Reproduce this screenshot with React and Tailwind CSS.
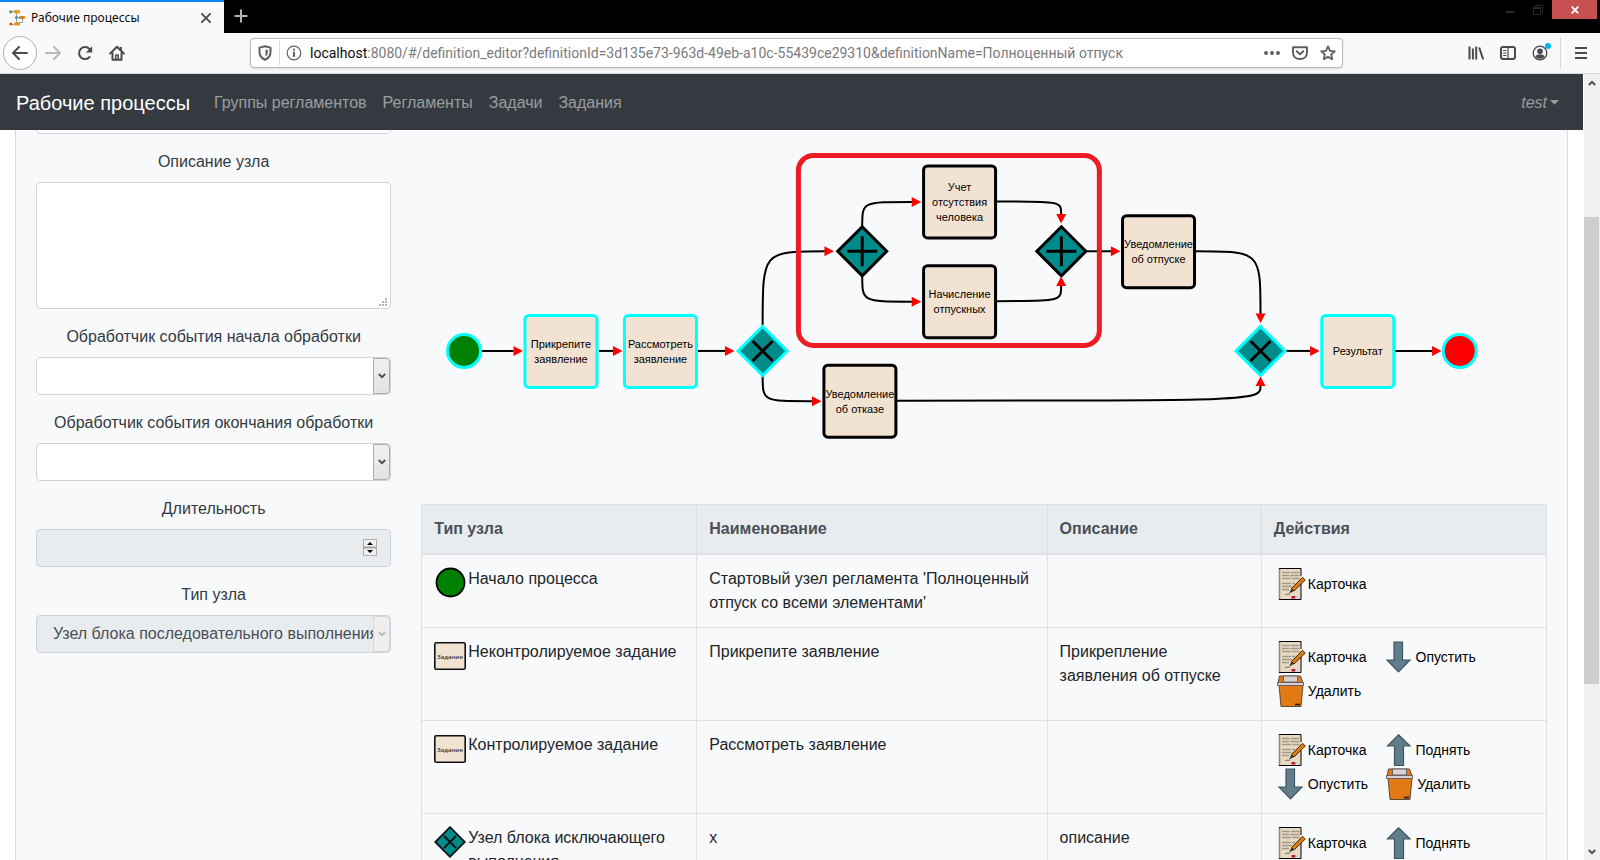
import React from "react";

/* ---------- browser chrome icons ---------- */

function Favicon() {
  return (
    <svg width="16" height="16" viewBox="0 0 16 16" fill="none" aria-hidden="true">
      <path d="M3 1.500h4M7.500 3v10M3 14.500h3M8 7.500h2M13.500 9v3.500M13.500 12.500H8" stroke="#9aa0a4" />
      <circle cx="1.800" cy="1.800" r="1.600" fill="#3e9a6f" />
      <circle cx="1.800" cy="14" r="1.600" fill="#cf4b3c" />
      <rect x="5" y="0" width="6" height="3.500" rx="1" fill="#e0a020" />
      <rect x="5" y="12.500" width="6" height="3" rx="1" fill="#d89a22" />
      <rect x="10" y="6" width="6" height="3" rx="1" fill="#d28a1c" />
      <path d="M7.500 5.500L9.500 7.500 7.500 9.500 5.500 7.500z" fill="#4b93a8" />
    </svg>
  );
}

function Icon({ size = 16, children, className = "" }) {
  return (
    <svg width={size} height={size} viewBox="0 0 16 16" fill="none" stroke="currentColor" strokeWidth="2" strokeLinecap="round" strokeLinejoin="round" className={className} aria-hidden="true">
      {children}
    </svg>
  );
}

function ToolButton({ label, children, className = "" }) {
  return (
    <button type="button" aria-label={label} className={"flex size-8 shrink-0 items-center justify-center text-[#4a4a4f] " + className}>
      {children}
    </button>
  );
}

function TabStrip() {
  return (
    <header className="flex h-[33px] shrink-0 items-start bg-black">
      <div className="flex h-full w-56 items-center border-t-2 border-[#0a84ff] bg-[#f9f9fa] pl-[9px] pr-2">
        <Favicon />
        <span className="ml-1.5 flex-1 font-['Noto_Sans',sans-serif] text-[12px] text-[#0c0c0d]">Рабочие процессы</span>
        <button type="button" aria-label="Закрыть вкладку" className="flex size-5 items-center justify-center text-[#4a4a4f]">
          <Icon size={12}><path d="M2.500 2.500l11 11M13.500 2.500l-11 11" strokeWidth="2.400" /></Icon>
        </button>
      </div>
      <button type="button" aria-label="Новая вкладка" className="flex h-8 w-[34px] items-center justify-center text-[#b4b4b4]">
        <Icon size={16}><path d="M8 1.500v13M1.500 8h13" strokeLinecap="butt" /></Icon>
      </button>
      <div className="ml-auto flex h-[19px] pr-[3px]">
        <button type="button" aria-label="Свернуть" className="flex w-7 items-center justify-center text-[#2b2b2b]">
          <svg width="8" height="8" aria-hidden="true"><path d="M0 6h8" stroke="currentColor" strokeWidth="2" /></svg>
        </button>
        <button type="button" aria-label="Развернуть" className="flex w-7 items-center justify-center text-[#2b2b2b]">
          <svg width="10" height="10" fill="none" aria-hidden="true"><path d="M.500 2.500h7v7h-7zM.500 3.500h7M2 .500h7.500V8" stroke="currentColor" /></svg>
        </button>
        <button type="button" aria-label="Закрыть" className="flex w-[45px] items-center justify-center bg-[#c75050] text-white">
          <svg width="8" height="8" aria-hidden="true"><path d="M.700.700l6.600 6.600M7.300.700L.700 7.300" stroke="currentColor" strokeWidth="1.800" /></svg>
        </button>
      </div>
    </header>
  );
}

function Toolbar() {
  return (
    <div className="flex h-[41px] shrink-0 items-center border-b border-[#d7d7db] bg-[#f9f9fa] px-[3px]">
      <button type="button" aria-label="Назад" className="flex size-[34px] items-center justify-center rounded-full border border-[#b1b1b3] bg-white text-[#4a4a4f]">
        <Icon><path d="M15 8H1.500M7 2L1 8l6 6" /></Icon>
      </button>
      <ToolButton label="Вперёд" className="text-[#b9b9bb]"><Icon><path d="M1 8h13.500M9 2l6 6-6 6" /></Icon></ToolButton>
      <ToolButton label="Обновить"><Icon>
        <path d="M12.600 12A6 6 0 1 1 12.500 4" />
        <path d="M15.200 1.200v6.300h-6.300z" fill="currentColor" stroke="none" />
      </Icon></ToolButton>
      <ToolButton label="Домой"><Icon>
        <path d="M1.200 8.500L8 1.800l6.800 6.700" /><path d="M3.500 8v6.800h9V8" />
        <path d="M6.800 14.500V10h2.400v4.500" strokeWidth="1.500" /><path d="M11.800 2v3" strokeLinecap="butt" />
      </Icon></ToolButton>
      <div className="ml-[117px] flex h-[30px] min-w-0 flex-1 items-center rounded-sm border border-[#b9b9bb] bg-white pl-1.5 shadow-sm">
        <Icon className="shrink-0 text-[#5f5f63]">
          <path d="M2.500 2.600L8 1.300l5.500 1.300v4.400c0 4-2.500 6.500-5.500 7.700C5 13.500 2.500 11 2.500 7z" />
          <path d="M8.500 4.500v7c1.500-1 2.300-2.500 2.300-4.500V5z" fill="currentColor" stroke="none" />
        </Icon>
        <span className="mx-1.5 h-6 w-px bg-[#d7d7db]" />
        <Icon className="shrink-0 text-[#5f5f63]"><circle cx="8" cy="8" r="6.800" strokeWidth="1.200" /><path d="M8 7.500v3.700" /><path d="M8 4.600v.100" /></Icon>
        <p className="ml-2 min-w-0 flex-1 truncate font-[Roboto,sans-serif] text-[14px] text-[#7a7a7d]">
          <span className="text-[#0c0c0d]">localhost</span>:8080/#/definition_editor?definitionId=3d135e73-963d-49eb-a10c-55439ce29310&amp;definitionName=Полноценный отпуск
        </p>
        <button type="button" aria-label="Действия на странице" className="flex size-7 items-center justify-center text-[#5f5f63]">
          <Icon><g fill="currentColor" stroke="none"><circle cx="2" cy="8" r="2" /><circle cx="8" cy="8" r="2" /><circle cx="14" cy="8" r="2" /></g></Icon>
        </button>
        <button type="button" aria-label="Сохранить в Pocket" className="flex size-7 items-center justify-center text-[#5f5f63]">
          <Icon><path d="M1 2.200h14v5.300c0 4-3 6.500-7 6.500s-7-2.500-7-6.500z" /><path d="M4.800 6.300L8 9.400l3.200-3.100" /></Icon>
        </button>
        <button type="button" aria-label="Добавить в закладки" className="flex size-7 items-center justify-center text-[#5f5f63]">
          <Icon><path d="M8 1.400l2 4.400 4.800.500-3.600 3.200 1 4.800L8 11.900l-4.200 2.400 1-4.800L1.200 6.300 6 5.800z" strokeWidth="1.800" /></Icon>
        </button>
      </div>
      <div className="ml-[117px] flex items-center">
        <ToolButton label="Библиотека"><Icon><path d="M1.500 1.500v13M4.900 3.500v11M8.200 1.500v13M11.200 2.500l4 12" strokeLinecap="butt" /></Icon></ToolButton>
        <ToolButton label="Боковая панель"><Icon><rect x="1" y="2" width="14" height="12" rx="2" /><path d="M8 2v12" strokeWidth="1.200" /><path d="M3.500 5.500h2.500M3.500 8h2.500M3.500 10.500h2.500" strokeWidth="1" /></Icon></ToolButton>
        <ToolButton label="Аккаунт" className="relative">
          <Icon><circle cx="8" cy="8" r="6.800" strokeWidth="1.300" /><circle cx="8" cy="6.300" r="2.800" fill="currentColor" stroke="none" /><path d="M3.500 11.500c1-2 2.300-2 4.500-2s3.500 0 4.500 2c-1 1.500-2.600 2.200-4.500 2.200s-3.500-.700-4.500-2.200z" fill="currentColor" stroke="none" /></Icon>
          <span className="absolute right-[5px] top-[6px] size-1.5 rounded-full bg-[#00b3f4]" />
        </ToolButton>
        <span className="ml-1 h-8 w-px bg-[#d7d7db]" />
        <ToolButton label="Меню" className="ml-1"><Icon><path d="M2 3h12M2 8h12M2 13h12" strokeLinecap="butt" /></Icon></ToolButton>
      </div>
    </div>
  );
}

/* ---------- site navigation ---------- */

const links = ["Группы регламентов", "Регламенты", "Задачи", "Задания"];

function NavBar() {
  return (
    <nav className="flex h-14 shrink-0 items-center bg-[#343a40] px-4 pt-px text-white/50">
      <a href="#/" className="mr-4 text-xl text-white">Рабочие процессы</a>
      {links.map((l) => <a key={l} href="#/" className="px-2">{l}</a>)}
      <button type="button" className="ml-auto flex items-center gap-[3px] px-2 italic">
        test
        <svg width="9" height="5" aria-hidden="true"><path d="M0 0h9L4.500 4.800z" fill="currentColor" /></svg>
      </button>
    </nav>
  );
}

/* ---------- node form ---------- */

const field = "block w-full rounded border border-[#ced4da] text-[#495057]";

function Field({ id, label, children }) {
  return (
    <div className="mb-4">
      <label htmlFor={id} className="mb-2 block text-center">{label}</label>
      <div className="relative">{children}</div>
    </div>
  );
}

function Select({ id, disabled, value }) {
  return (
    <>
      <select id={id} disabled={disabled} className={field + " h-[38px] appearance-none pl-4 pr-[17px] opacity-100 " + (disabled ? "bg-[#e9ecef]" : "bg-white")}>
        <option>{value}</option>
      </select>
      <span className={"pointer-events-none absolute inset-y-px right-px flex w-[17px] items-center justify-center rounded-r-sm border " + (disabled ? "border-[#d6d6d6] bg-[#efefef] text-[#bdbdbd]" : "border-[#adadad] bg-gradient-to-b from-[#f0f0f0] to-[#e3e3e3] text-[#505050]")}>
        <svg width="8" height="6" fill="none" aria-hidden="true"><path d="M.800 1L4 4.200 7.200 1" stroke="currentColor" strokeWidth="2" /></svg>
      </span>
    </>
  );
}

function NodeForm() {
  return (
    <form className="text-[#343a40]">
      <input aria-label="Наименование узла" className={field + " mb-4 h-[38px] bg-white px-3"} />
      <Field id="description" label="Описание узла">
        <textarea id="description" className={field + " h-[127px] resize-none bg-white px-3 py-1.5"} />
        <svg width="8" height="8" className="pointer-events-none absolute bottom-[3px] right-1" fill="#b5b5b5" aria-hidden="true">
          <path d="M6 0h2v2H6zM3 3h2v2H3zM6 3h2v2H6zM0 6h2v2H0zM3 6h2v2H3zM6 6h2v2H6z" />
        </svg>
      </Field>
      <Field id="onStart" label="Обработчик события начала обработки"><Select id="onStart" value="" /></Field>
      <Field id="onEnd" label="Обработчик события окончания обработки"><Select id="onEnd" value="" /></Field>
      <Field id="duration" label="Длительность">
        <input id="duration" type="text" inputMode="numeric" disabled className={field + " h-[38px] bg-[#e9ecef] px-3"} />
        <svg width="14" height="17" className="pointer-events-none absolute right-3.5 top-2.5" aria-hidden="true">
          <path d="M.500.500h13v16H.500z" fill="#f0f0f0" stroke="#adadad" />
          <path d="M0 8.500h14" stroke="#a0a0a0" strokeWidth="2" />
          <path d="M4 6l3-3 3 3zM4 11h6l-3 3z" />
        </svg>
      </Field>
      <Field id="nodeType" label="Тип узла"><Select id="nodeType" disabled value="Узел блока последовательного выполнения" /></Field>
    </form>
  );
}

/* ---------- process diagram ---------- */

function Task({ x, y, lines, stroke = "#000" }) {
  const first = y + 4 - (lines.length - 1) * 7.5;
  return (
    <g>
      <rect x={x - 36} y={y - 36} width="72" height="72" rx="4" fill="#f2e2d2" stroke={stroke} strokeWidth="3" />
      {lines.map((t, i) => (
        <text key={t} x={x} y={first + i * 15} textAnchor="middle" fontSize="11">{t}</text>
      ))}
    </g>
  );
}

function Gateway({ x, y, kind, stroke = "#000" }) {
  return (
    <g transform={`translate(${x} ${y})`} strokeWidth="3">
      <path d="M0-24.500L24.500 0 0 24.500-24.500 0z" fill="#008b8b" stroke={stroke} />
      <path d={kind === "plus" ? "M0-15V15M-15 0H15" : "M-10-10L10 10M10-10L-10 10"} stroke="#000" />
    </g>
  );
}

const edges = [
  "M482 351H513.5", "M599 351H613", "M698 351H725.500",
  "M762.700 325C762.700 251.300 762.700 251.300 825 251.300",
  "M762.700 376C762.700 401.300 762.700 401.300 812 401.300",
  "M862.300 226C862.300 202 862.300 202 912 202",
  "M862.300 276C862.300 301.700 862.300 301.700 912 301.700",
  "M997 201.500C1061.300 201.500 1061.300 201.500 1061.300 214",
  "M997 301.200C1061.300 301.200 1061.300 301.200 1061.300 286",
  "M1086 251.300H1111.500",
  "M1196 251.300C1260.700 251.300 1260.700 251.300 1260.700 314",
  "M897 400.800C1260.700 400.800 1260.700 400.800 1260.700 386",
  "M1286 351H1310.500", "M1395 351H1432.500",
];

const heads = [
  [523, 351, 0], [622.5, 351, 0], [734.500, 351, 0], [834, 251.300, 0], [821.500, 401.300, 0],
  [921.300, 202, 0], [921.300, 301.700, 0], [1061.300, 223.500, 90], [1061.300, 276.500, -90],
  [1120.500, 251.300, 0], [1260.700, 323, 90], [1260.700, 376.500, -90], [1319.800, 351, 0], [1441.800, 351, 0],
];

function Diagram() {
  return (
    <svg viewBox="421 96 1126 392" className="mb-4 block w-full" fontFamily="'Liberation Sans', Arial, sans-serif" role="img" aria-label="Схема процесса">
      <g fill="none" stroke="#000" strokeWidth="2">{edges.map((d) => <path key={d} d={d} />)}</g>
      <circle cx="464" cy="351" r="16.500" fill="green" stroke="cyan" strokeWidth="3" />
      <Task x={561} y={351.5} stroke="cyan" lines={["Прикрепите", "заявление"]} />
      <Task x={660.5} y={351.5} stroke="cyan" lines={["Рассмотреть", "заявление"]} />
      <Gateway x={762.7} y={351} kind="x" stroke="cyan" />
      <Gateway x={862.3} y={251.3} kind="plus" />
      <Task x={959.7} y={202} lines={["Учет", "отсутствия", "человека"]} />
      <Task x={959.7} y={301.7} lines={["Начисление", "отпускных"]} />
      <Gateway x={1061.5} y={251.3} kind="plus" />
      <Task x={1158.7} y={251.7} lines={["Уведомление", "об отпуске"]} />
      <Task x={860} y={401.3} lines={["Уведомление", "об отказе"]} />
      <Gateway x={1260.7} y={351} kind="x" stroke="cyan" />
      <Task x={1358} y={351.5} stroke="cyan" lines={["Результат"]} />
      <circle cx="1460" cy="351" r="16.500" fill="red" stroke="cyan" strokeWidth="3" />
      <g fill="red">
        {heads.map(([x, y, a]) => <path key={`${x} ${y}`} d="M0 0L-9.500-5V5z" transform={`translate(${x} ${y}) rotate(${a})`} />)}
      </g>
      <rect x="798.500" y="155.500" width="301" height="190" rx="15" fill="none" stroke="#ed1c24" strokeWidth="5" />
    </svg>
  );
}

/* ---------- node table ---------- */

function NodeIcon({ kind }) {
  return (
    <svg width="32" height="32" viewBox="0 0 32 32" className="shrink-0" aria-hidden="true">
      {kind === "start" && <circle cx="16.500" cy="15.500" r="14" fill="green" stroke="#000" strokeWidth="1.800" />}
      {kind === "task" && (
        <>
          <rect x=".800" y="2.800" width="30.400" height="26.400" rx="1.500" fill="#f2e2d2" stroke="#111" strokeWidth="1.600" />
          <text x="16" y="18.500" textAnchor="middle" fontSize="6" fontWeight="600" fontFamily="'Open Sans', sans-serif" fill="#333">Задание</text>
        </>
      )}
      {kind === "x" && (
        <g stroke="#111" strokeWidth="1.800">
          <path d="M16 1.200L30.800 16 16 30.800 1.200 16z" fill="#008b8b" />
          <path d="M10 10l12 12M22 10L10 22" />
        </g>
      )}
    </svg>
  );
}

const art = {
  card: (
    <>
      <path d="M5 .500h22v31H5z" fill="#e8dac2" />
      <path d="M5.500 0v32" stroke="#8f8a86" strokeWidth="1.600" />
      <path d="M5 .500h22V8M27 16v15.500H5" fill="none" stroke="#000" />
      <path d="M8 4.500h8M17 4.500h8.500M8 7.500h7M16 7.500h9.500M8 10.500h9M18 10.500h7.500M8 15.500h9M18 15.500h3M8 18.500h10M8 21.500h7" stroke="#a59886" strokeWidth="1.500" />
      <path d="M11 26.800c2-1.500 3 .500 5-.700" fill="none" stroke="#8d8272" strokeWidth="1.200" />
      <path d="M17.500 28h4v2.500h-4z" fill="#c0143c" /><path d="M21.500 28h3v2.500h-3z" fill="#c9d4e4" />
      <path d="M17.500 20.500L28.500 9.300l2.800 2.700-11.300 11z" fill="#e07b12" stroke="#2b1c10" strokeWidth=".900" />
      <path d="M17.500 20.500L15 25.500l5-2.500z" fill="#333" />
    </>
  ),
  up: <path d="M16.500.800L28 12H21.500v19.500h-9V12H5.500z" fill="#607d8b" stroke="#3f5661" strokeWidth="1.200" />,
  down: <path d="M12 1h8.500v18H28L16.500 31 5 19h7z" fill="#607d8b" stroke="#3f5661" strokeWidth="1.200" />,
  remove: (
    <>
      <path d="M5.500 1h21L29 8H4z" fill="#e27a14" stroke="#5a4a40" />
      <path d="M9.500 1h14v6h-14z" fill="#d9d2d2" stroke="#6b6164" />
      <path d="M5 10h24l-2 21.500H7z" fill="#e27a14" stroke="#5a4a40" />
      <path d="M3.500 7.500h26v3h-26z" fill="#d9cfd2" stroke="#6b6164" />
      <path d="M21 29.500h5" stroke="#2b1400" strokeWidth="1.600" />
    </>
  ),
};

const captions = { card: "Карточка", up: "Поднять", down: "Опустить", remove: "Удалить" };

function Action({ kind }) {
  return (
    <button type="button" className="flex h-[34px] items-center gap-0.5 text-sm text-black">
      <svg width="32" height="32" viewBox="0 0 32 32" aria-hidden="true">{art[kind]}</svg>
      {captions[kind]}
    </button>
  );
}

const rows = [
  { icon: "start", type: "Начало процесса", name: "Стартовый узел регламента 'Полноценный отпуск со всеми элементами'", about: "", actions: ["card"] },
  { icon: "task", type: "Неконтролируемое задание", name: "Прикрепите заявление", about: "Прикрепление заявления об отпуске", actions: ["card", "down", "remove"] },
  { icon: "task", type: "Контролируемое задание", name: "Рассмотреть заявление", about: "", actions: ["card", "up", "down", "remove"] },
  { icon: "x", type: "Узел блока исключающего выполнения", name: "x", about: "описание", actions: ["card", "up", "down", "remove"] },
];

function NodeTable() {
  const cell = "border border-[#dee2e6] p-3 align-top";
  return (
    <table className="w-full table-fixed border-collapse text-left text-[#212529]">
      <colgroup><col className="w-[24.45%]" /><col className="w-[31.15%]" /><col className="w-[19.05%]" /><col className="w-[25.35%]" /></colgroup>
      <thead className="bg-[#e9ecef] text-[#495057]">
        <tr>
          {["Тип узла", "Наименование", "Описание", "Действия"].map((h) => (
            <th key={h} scope="col" className="border border-b-2 border-[#dee2e6] p-3 font-bold">{h}</th>
          ))}
        </tr>
      </thead>
      <tbody>
        {rows.map((r) => (
          <tr key={r.type}>
            <td className={cell}><div className="flex items-start gap-0.5"><NodeIcon kind={r.icon} /><span>{r.type}</span></div></td>
            <td className={cell}>{r.name}</td>
            <td className={cell}>{r.about}</td>
            <td className={cell}><div className="flex flex-wrap gap-x-[15px]">{r.actions.map((a) => <Action key={a} kind={a} />)}</div></td>
          </tr>
        ))}
      </tbody>
    </table>
  );
}

function Scrollbar() {
  return (
    <div className="flex w-4 shrink-0 flex-col bg-[#f0f0f0] text-[#505050]" aria-hidden="true">
      <div className="flex h-[17px] items-center justify-center"><svg width="8" height="6" fill="none"><path d="M.800 5L4 1.800 7.200 5" stroke="currentColor" strokeWidth="2" /></svg></div>
      <div className="flex flex-1 flex-col">
        <div className="flex-[126]" />
        <div className="mr-px flex-[467] bg-[#cdcdcd]" />
        <div className="flex-[159]" />
      </div>
      <div className="flex h-[17px] items-center justify-center"><svg width="8" height="6" fill="none"><path d="M.800 1L4 4.200 7.200 1" stroke="currentColor" strokeWidth="2" /></svg></div>
    </div>
  );
}

export default function App() {
  return (
    <div className="flex h-screen flex-col overflow-hidden bg-white font-['Liberation_Sans',Arial,sans-serif] text-base">
      <TabStrip />
      <Toolbar />
      <div className="flex min-h-0 flex-1">
        <div className="mr-px flex min-w-0 flex-1 flex-col">
          <NavBar />
          <main className="min-h-0 flex-1 overflow-hidden">
            <section className="mx-[15px] -mt-[55px] grid grid-cols-4 gap-[30px] border border-[#d9dbde] bg-[#f8f9fb] p-5">
              <NodeForm />
              <div className="col-span-3">
                <Diagram />
                <NodeTable />
              </div>
            </section>
          </main>
        </div>
        <Scrollbar />
      </div>
    </div>
  );
}
